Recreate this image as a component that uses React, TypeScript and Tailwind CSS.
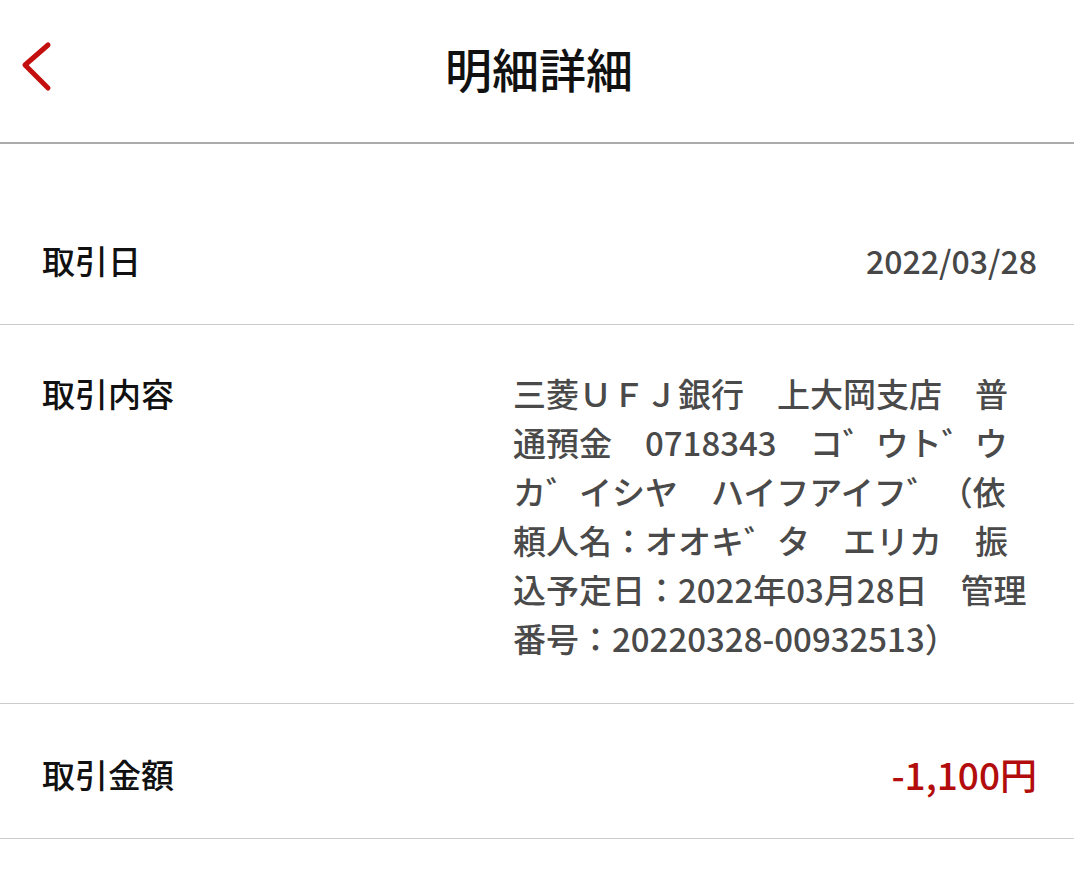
import React from "react";

export default function App() {
  const font = { fontFamily: '"Noto Sans CJK JP", "Noto Sans", sans-serif' };
  return (
    <div className="w-[1074px] h-[874px] bg-white overflow-hidden" style={font}>
      <header className="relative h-[144px] flex items-center justify-center border-b-2 border-[#ababab]">
        <button className="absolute left-[18px] top-[40px] w-[36px] h-[54px] flex items-center justify-center">
          <svg width="36" height="54" viewBox="0 0 36 54">
            <path d="M30 5 L7 25 L30 48" fill="none" stroke="#c40f0f" strokeWidth="5" strokeLinecap="round" strokeLinejoin="round" />
          </svg>
        </button>
        <h1 className="text-[47px] font-medium text-[#111] leading-none mb-[8px] ml-[4px]">明細詳細</h1>
      </header>
      <main className="pt-[46px]">
        <div className="flex items-center justify-between pl-[42px] pr-[37px] h-[135px] border-b border-[#cccccc]">
          <span className="text-[33px] font-medium text-[#111] leading-[49px] pt-[6px]">取引日</span>
          <span className="text-[32px] font-medium text-[#474747] leading-[49px] pt-[6px]">2022/03/28</span>
        </div>
        <div className="flex justify-between pl-[42px] pr-[41px] pt-[44px] pb-[40px] border-b border-[#cccccc]">
          <span className="text-[33px] font-medium text-[#111] leading-[49px]">取引内容</span>
          <p className="w-[520px] text-[33px] font-medium text-[#4a4a4a] leading-[49px] break-all">
            三菱ＵＦＪ銀行　上大岡支店　普通預金　0718343　コ゛ウト゛ウカ゛イシヤ　ハイフアイフ゛（依頼人名：オオキ゛タ　エリカ　振込予定日：2022年03月28日　管理番号：20220328-00932513）
          </p>
        </div>
        <div className="flex items-center justify-between pl-[42px] pr-[37px] h-[135px] border-b border-[#cccccc]">
          <span className="text-[33px] font-medium text-[#111] leading-[49px] pt-[6px]">取引金額</span>
          <span className="text-[37px] font-medium text-[#b30c0c] leading-[49px] pt-[6px]">-1,100円</span>
        </div>
      </main>
    </div>
  );
}
